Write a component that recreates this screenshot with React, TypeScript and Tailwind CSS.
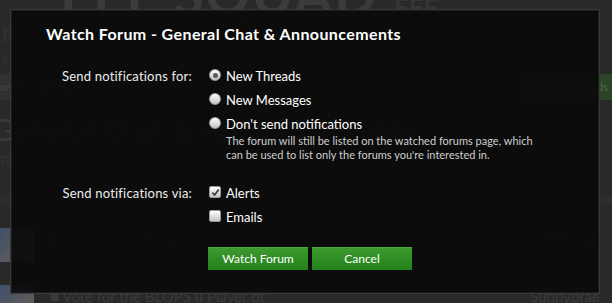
import React from 'react';

const Radio: React.FC<{ checked?: boolean }> = ({ checked }) => (
  <span className="mt-[1px] flex h-[12px] w-[12px] shrink-0 items-center justify-center rounded-full border border-[#9a9a9a] bg-gradient-to-b from-[#ffffff] to-[#c4c4c4]">
    {checked && <span className="h-[5px] w-[5px] rounded-full bg-[#5a5a5a]" />}
  </span>
);

const Checkbox: React.FC<{ checked?: boolean }> = ({ checked }) => (
  <span className="mt-[1px] flex h-[12px] w-[12px] shrink-0 items-center justify-center rounded-[2px] border border-[#9a9a9a] bg-gradient-to-b from-[#ffffff] to-[#c4c4c4]">
    {checked && (
      <svg viewBox="0 0 10 10" className="h-[9px] w-[9px]">
        <path d="M1.5 5.2 L4 7.8 L8.6 1.6" fill="none" stroke="#3a3a3a" strokeWidth="1.9" />
      </svg>
    )}
  </span>
);

const Background: React.FC = () => (
  <div className="h-[303px] w-[612px] overflow-hidden bg-[#292929] text-[#3b3b3b]">
    <div className="-mt-[34px] ml-[60px] flex items-end gap-4">
      <span className="text-[56px] font-bold leading-none tracking-wide">FFF SQUAD</span>
      <span className="mb-[2px] text-[26px] font-bold leading-none text-[#353535]">FFF</span>
    </div>
    <div className="ml-[2px] mt-[2px] text-[20px] leading-none text-[#333]">FRIENDS, FUN &amp; FAIRPLAY SINCE 2007</div>
    <div className="ml-[2px] mt-[6px] text-[12px] text-[#333]">S GAMING COMMUNITY</div>
    <div className="mt-[6px] flex h-[26px] items-center justify-between bg-[#303030] text-[11px]">
      <span className="text-[#444]">orums · General</span>
      <span className="flex h-full w-[92px] items-center justify-end bg-[#2c4528] pr-1 text-[#4a6a44]">Threads</span>
    </div>
    <div className="-ml-[8px] mt-[14px] text-[30px] leading-none text-[#3a3a3a]">General Chat &amp; Announcements</div>
    <div className="mt-[8px] text-[11px] text-[#353535]">The place for news and general discussion</div>
    <div className="mt-[22px] flex justify-between text-[11px] text-[#353535]">
      <span>ge 1 of 2</span>
      <span>Watch Forum · Selected Threads</span>
    </div>
    <div className="mt-[21px] flex items-start gap-4">
      <div className="h-[34px] w-[34px] bg-gradient-to-br from-[#3f4f6a] to-[#6a6050]" />
      <div className="flex-1 text-[15px] text-[#3a3a3a]">■ Server Donations</div>
      <div className="mr-3 text-[15px] text-[#3a3a3a]">FFFHugo</div>
    </div>
    <div className="mt-[23px] flex items-start gap-4">
      <div className="h-[34px] w-[34px] bg-gradient-to-br from-[#3f4f6a] to-[#6a6050]" />
      <div className="flex-1 text-[15px] text-[#3a3a3a]">■ Vote for the BLOPS II Player of</div>
      <div className="mr-3 text-[15px] text-[#3a3a3a]">Sunnybrae</div>
    </div>
  </div>
);

const App: React.FC = () => {
  return (
    <div className="relative h-[303px] w-[612px] overflow-hidden font-['Lato',sans-serif]">
      <Background />
      <div className="absolute left-[10px] top-[9px] h-[285px] w-[590px] border border-[#3a3a3a] bg-[rgba(10,10,10,0.93)] shadow-[inset_0_0_0_1px_#1c1c1c]">
        <h2 className="ml-[35px] mt-[13px] text-[16px] font-bold leading-[22px] tracking-[0.4px] text-white">
          Watch Forum - General Chat &amp; Announcements
        </h2>

        <div className="mt-[23px] grid grid-cols-[181px_1fr] gap-x-[17px] text-[13px] leading-[16px] text-[#ececec]">
          <div className="text-right tracking-[0.2px]">Send notifications for:</div>
          <div className="flex flex-col gap-[8px]">
            <label className="flex items-start gap-[5px]">
              <Radio checked />
              <span className="text-white">New Threads</span>
            </label>
            <label className="flex items-start gap-[5px]">
              <Radio />
              <span className="text-white">New Messages</span>
            </label>
            <div>
              <label className="flex items-start gap-[5px]">
                <Radio />
                <span className="text-white">Don't send notifications</span>
              </label>
              <p className="ml-[17px] mt-[2px] text-[11px] leading-[14px] text-[#cfcfcf]">
                The forum will still be listed on the watched forums page, which
                <br />
                can be used to list only the forums you're interested in.
              </p>
            </div>
          </div>

          <div className="mt-[23px] text-right tracking-[0.2px]">Send notifications via:</div>
          <div className="mt-[23px] flex flex-col gap-[8px]">
            <label className="flex items-start gap-[5px]">
              <Checkbox checked />
              <span className="text-white">Alerts</span>
            </label>
            <label className="flex items-start gap-[5px]">
              <Checkbox />
              <span className="text-white">Emails</span>
            </label>
          </div>

          <div />
          <div className="-ml-[1px] mt-[22px] flex gap-[4px]">
            <button className="h-[23px] w-[100px] border-t border-[#4fa83f] bg-gradient-to-b from-[#3d9a2e] to-[#22801b] text-[12px] text-white">
              Watch Forum
            </button>
            <button className="h-[23px] w-[100px] border-t border-[#4fa83f] bg-gradient-to-b from-[#3d9a2e] to-[#22801b] text-[12px] text-white">
              Cancel
            </button>
          </div>
        </div>
      </div>
    </div>
  );
};

export default App;
